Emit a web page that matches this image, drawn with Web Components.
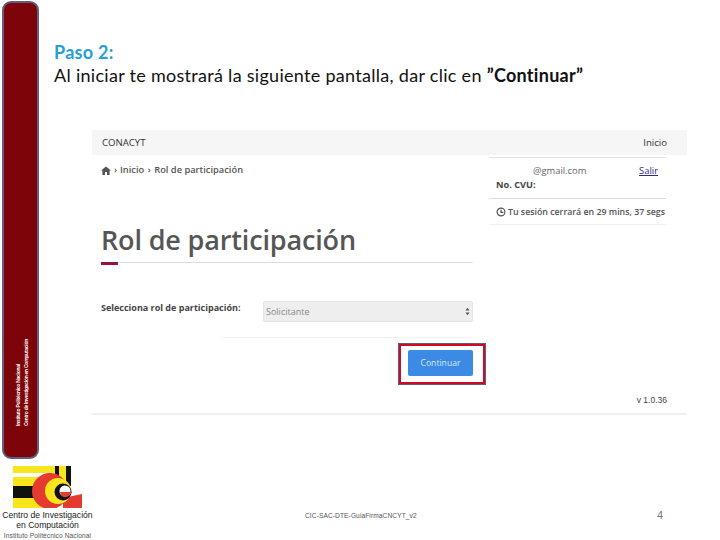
<!DOCTYPE html>
<html lang="es">
<head>
<meta charset="utf-8">
<title>Paso 2</title>
<style>
  html, body { margin: 0; padding: 0; background: #fff; }
</style>
</head>
<body>
<guia-slide>
  <side-bar slot="side"></side-bar>
  <cic-logo slot="side"></cic-logo>
  <slide-heading slot="main"></slide-heading>
  <app-shot slot="main"></app-shot>
  <slide-footer slot="main"></slide-footer>
</guia-slide>

<script>
class GuiaSlide extends HTMLElement
{
    constructor()
    {
        super();
        this.attachShadow({mode: "open"}).innerHTML = `
            <style>
                :host { display: grid; grid-template-columns: 92px 1fr; width: 720px; height: 540px; overflow: hidden; background: #fff; }
                .side { display: flex; flex-direction: column; align-items: flex-start; }
                .main { display: flex; flex-direction: column; min-width: 0; }
            </style>
            <div class="side"><slot name="side"></slot></div>
            <div class="main"><slot name="main"></slot></div>`;
    }
}

class SideBar extends HTMLElement
{
    constructor()
    {
        super();
        this.attachShadow({mode: "open"}).innerHTML = `
            <style>
                :host { display: flex; box-sizing: border-box; width: 37px; height: 458px; margin: 1px 0 0 2px; background: #7d0408; border: 2px solid #5f5f80; border-radius: 9px; padding: 0 0 31px 10px; align-items: flex-end; }
                div { writing-mode: vertical-rl; transform: rotate(180deg); font: bold 5px/8px "Liberation Sans", sans-serif; letter-spacing: -.27px; color: #fff; white-space: nowrap; }
            </style>
            <div>Instituto Politécnico Nacional<br>Centro de Investigación en Computación</div>`;
    }
}

class CicLogo extends HTMLElement
{
    constructor()
    {
        super();
        this.attachShadow({mode: "open"}).innerHTML = `
            <style>
                :host { display: block; width: 95px; margin-top: 7px; text-align: center; font-family: "Liberation Sans", sans-serif; color: #333; }
                svg { display: block; margin-left: 13px; }
                p { margin: 0; white-space: nowrap; }
                .a { font-size: 8.6px; line-height: 9.5px; margin-top: 3px; color: #222; }
                .b { font-size: 6.6px; line-height: 11px; color: #555; letter-spacing: .1px; }
            </style>
            <svg width="69" height="42" viewBox="0 0 69 42">
                <rect width="69" height="42" fill="#fff"/>
                <rect width="42" height="7" fill="#f8e61c"/>
                <rect y="11" width="42" height="9" fill="#f8e61c"/>
                <rect y="20" width="42" height="12" fill="#111"/>
                <rect y="32" width="42" height="10" fill="#f8e61c"/>
                <rect x="42" width="4" height="18" fill="#111"/>
                <rect x="46" width="7" height="18" fill="#f8e61c"/>
                <rect x="53" width="5" height="20" fill="#111"/>
                <path d="M50 32 L69 28 V42 H50 Z" fill="#e53a30"/>
                <circle cx="37" cy="25" r="18" fill="#e53a30"/>
                <rect x="20" y="42" width="40" height="2" fill="#fff"/>
                <circle cx="45" cy="25" r="13" fill="#f8e61c"/>
                <circle cx="50" cy="26" r="8.5" fill="#111"/>
                <circle cx="52" cy="25" r="5.5" fill="#fff"/>
                <path d="M47 26 H59 Q56 32 51 31 Q48 30 47 26 Z" fill="#e53a30"/>
            </svg>
            <p class="a">Centro de Investigación<br>en Computación</p>
            <p class="b">Instituto Politécnico Nacional</p>`;
    }
}

class SlideHeading extends HTMLElement
{
    constructor()
    {
        super();
        this.attachShadow({mode: "open"}).innerHTML = `
            <style>
                :host { display: block; height: 130px; box-sizing: border-box; padding-top: 41px; margin-left: -38px; font: 18px/23px Lato, "Open Sans", sans-serif; letter-spacing: .29px; color: #111; white-space: nowrap; }
                .paso { color: #27a0d6; font-weight: bold; }
            </style>
            <div class="paso">Paso 2:</div>
            <div>Al iniciar te mostrará la siguiente pantalla, dar clic en <b>”Continuar”</b></div>`;
    }
}

class AppShot extends HTMLElement
{
    constructor()
    {
        super();
        this.attachShadow({mode: "open"}).innerHTML = `
            <style>
                :host { display: block; width: 595px; height: 283px; font-family: "Open Sans", sans-serif; color: #444; border-bottom: 2px solid #f0f0f0; box-sizing: content-box; }
                .nav { display: flex; justify-content: space-between; align-items: center; height: 25px; background: #f6f6f6; padding: 0 20px 0 10px; font-size: 9.6px; color: #333; }
                .body { display: grid; grid-template-columns: 381px 177px; column-gap: 16px; }
                .left { padding: 8px 0 0 9px; position: relative; }
                .crumbs { display: flex; align-items: center; font-size: 9.3px; font-weight: 600; line-height: 14px; color: #555; height: 14px; white-space: nowrap; }
                .crumbs svg { margin-right: 2px; }
                .crumbs i { font-style: normal; width: 10px; text-align: center; }
                h1 { margin: 43px 0 0; font-size: 27px; line-height: 40px; font-weight: 600; color: #565656; white-space: nowrap; letter-spacing: -.15px; }
                .rule { height: 1px; background: #dcdcdc; margin-top: 2px; position: relative; }
                .rule::before { content: ""; position: absolute; left: 0; top: 0; width: 17px; height: 3px; background: #9b0f45; }
                .field { display: flex; align-items: center; margin-top: 38px; height: 21px; }
                label { width: 162px; font-size: 9px; font-weight: 700; color: #444; white-space: nowrap; position: relative; top: -4px; }
                .select { display: flex; justify-content: space-between; align-items: center; box-sizing: border-box; width: 210px; height: 21px; background: #eee; border: 1px solid #e4e4e4; border-radius: 2px; padding: 0 2px; font-size: 9px; color: #888; }
                .select svg { display: block; }
                .sep { height: 1px; background: #f0f0f0; margin: 15px 0 0 122px; }
                .actions { display: flex; justify-content: flex-end; margin: 5px -13px 0 0; }
                .outline { padding: 1px; background: #5f5f80; }
                .red { padding: 1px; border: 2px solid #cf0a22; background: #fff; }
                .pad { padding: 3px 9px 5px 6px; background: #fff; }
                button { display: block; width: 65px; height: 26px; padding: 0; border: 0; border-radius: 2px; background: #3b8ae6; font: 8.6px "Open Sans", sans-serif; color: #d9e9fb; }
                .right { font-size: 8.8px; padding-top: 2px; }
                .mail { display: flex; justify-content: space-between; border-top: 1px solid #e2e2e2; padding: 6px 8px 0 44px; line-height: 14px; font-size: 9.4px; color: #666; }
                .mail a { color: #2b2b8c; text-decoration: underline; }
                .cvu { font-weight: 700; line-height: 14px; padding: 0 0 4px 7px; border-bottom: 1px solid #dcdcdc; height: 16px; font-size: 9.2px; color: #444; }
                .ses { display: flex; align-items: center; gap: 2px; padding: 6px 0 0 7px; height: 20px; box-sizing: border-box; font-weight: 600; font-size: 8.8px; white-space: nowrap; color: #555; }
                .ses + hr { border: 0; height: 1px; margin: 5px 0 0; background: #f0f0f0; }
                .ver { position: absolute; right: -194px; top: 240px; font: 8.5px "Liberation Sans", sans-serif; color: #444; white-space: nowrap; }
            </style>
            <div class="nav"><span>CONACYT</span><span>Inicio</span></div>
            <div class="body">
                <div class="left">
                    <div class="crumbs">
                        <svg width="10" height="9" viewBox="0 0 10 9"><path d="M5 .5 L10 4.6 H8.6 V9 H6 V6 H4 V9 H1.4 V4.6 H0 Z" fill="#555"/></svg>
                        <i style="width:5px">›</i><span style="margin-left:2px">Inicio</span><i>›</i><span>Rol de participación</span>
                    </div>
                    <h1>Rol de participación</h1>
                    <div class="rule"></div>
                    <div class="field">
                        <label>Selecciona rol de participación:</label>
                        <div class="select"><span>Solicitante</span>
                            <svg width="5" height="9" viewBox="0 0 5 9"><path d="M.5 3.5 L2.5 .8 L4.5 3.5 Z M.5 5.5 L2.5 8.2 L4.5 5.5 Z" fill="#555"/></svg>
                        </div>
                    </div>
                    <div class="sep"></div>
                    <div class="actions">
                        <div class="outline"><div class="red"><div class="pad"><button>Continuar</button></div></div></div>
                    </div>
                    <span class="ver">v 1.0.36</span>
                </div>
                <div class="right">
                    <div class="mail"><span>@gmail.com</span><a>Salir</a></div>
                    <div class="cvu">No. CVU:</div>
                    <div class="ses">
                        <svg width="10" height="10" viewBox="0 0 10 10" fill="none" stroke="#555" stroke-width="1.2"><circle cx="5" cy="5" r="3.9"/><path d="M5 2.8 V5.3 H7.4"/></svg>
                        <span>Tu sesión cerrará en 29 mins, 37 segs</span>
                    </div>
                    <hr>
                </div>
            </div>`;
    }
}

class SlideFooter extends HTMLElement
{
    constructor()
    {
        super();
        this.attachShadow({mode: "open"}).innerHTML = `
            <style>
                :host { display: flex; align-items: center; height: 20px; margin-top: 90px; padding-left: 213px; font-family: "Liberation Sans", sans-serif; color: #666; white-space: nowrap; }
                .doc { font-size: 6.6px; width: 352px; letter-spacing: .1px; color: #555; }
                .num { font-size: 11px; color: #777; }
            </style>
            <span class="doc">CIC-SAC-DTE-GuiaFirmaCNCYT_v2</span>
            <span class="num">4</span>`;
    }
}

customElements.define("guia-slide", GuiaSlide);
customElements.define("side-bar", SideBar);
customElements.define("cic-logo", CicLogo);
customElements.define("slide-heading", SlideHeading);
customElements.define("app-shot", AppShot);
customElements.define("slide-footer", SlideFooter);
</script>
</body>
</html>
